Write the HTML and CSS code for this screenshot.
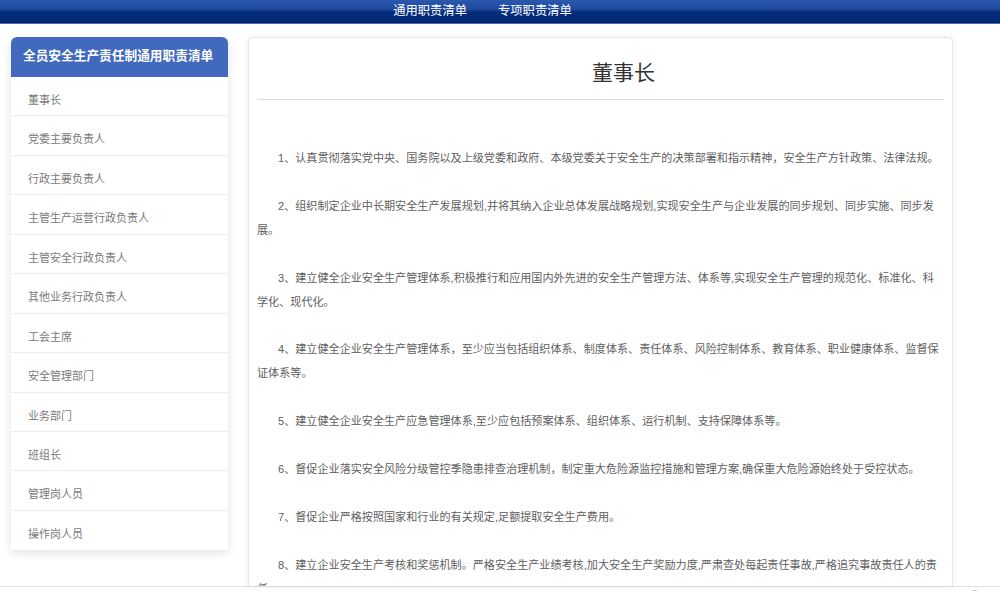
FILE: index.html
```html
<!DOCTYPE html>
<html>
<head>
<meta charset="utf-8">
<title>全员安全生产责任制通用职责清单</title>
<link rel="stylesheet" href="styles.css">
</head>
<body>
<header class="topnav">
  <a class="topnav-link" href="#">通用职责清单</a>
  <a class="topnav-link" href="#">专项职责清单</a>
</header>
<div class="layout">
  <aside class="sidebar">
    <div class="sidebar-head">全员安全生产责任制通用职责清单</div>
    <ul class="sidebar-list">
      <li class="sidebar-item">董事长</li>
      <li class="sidebar-item">党委主要负责人</li>
      <li class="sidebar-item">行政主要负责人</li>
      <li class="sidebar-item">主管生产运营行政负责人</li>
      <li class="sidebar-item">主管安全行政负责人</li>
      <li class="sidebar-item">其他业务行政负责人</li>
      <li class="sidebar-item">工会主席</li>
      <li class="sidebar-item">安全管理部门</li>
      <li class="sidebar-item">业务部门</li>
      <li class="sidebar-item">班组长</li>
      <li class="sidebar-item">管理岗人员</li>
      <li class="sidebar-item">操作岗人员</li>
    </ul>
  </aside>
  <main class="card">
    <h1 class="card-title">董事长</h1>
    <div class="card-body">
      <p>1、认真贯彻落实党中央、国务院以及上级党委和政府、本级党委关于安全生产的决策部署和指示精神，安全生产方针政策、法律法规。</p>
      <p>2、组织制定企业中长期安全生产发展规划,并将其纳入企业总体发展战略规划,实现安全生产与企业发展的同步规划、同步实施、同步发<br>展。</p>
      <p>3、建立健全企业安全生产管理体系,积极推行和应用国内外先进的安全生产管理方法、体系等,实现安全生产管理的规范化、标准化、科<br>学化、现代化。</p>
      <p>4、建立健全企业安全生产管理体系，至少应当包括组织体系、制度体系、责任体系、风险控制体系、教育体系、职业健康体系、监督保<br>证体系等。</p>
      <p>5、建立健全企业安全生产应急管理体系,至少应包括预案体系、组织体系、运行机制、支持保障体系等。</p>
      <p>6、督促企业落实安全风险分级管控季隐患排查治理机制，制定重大危险源监控措施和管理方案,确保重大危险源始终处于受控状态。</p>
      <p>7、督促企业严格按照国家和行业的有关规定,足额提取安全生产费用。</p>
      <p>8、建立企业安全生产考核和奖惩机制。严格安全生产业绩考核,加大安全生产奖励力度,严肃查处每起责任事故,严格追究事故责任人的责<br>任。</p>
    </div>
  </main>
</div>
<footer class="footer">
  <svg class="footer-icon" width="22" height="22" viewBox="0 0 22 22"><circle cx="11" cy="11" r="9" fill="none" stroke="#aaa" stroke-width="1.5"/></svg>
</footer>
</body>
</html>
```
FILE: styles.css
```css
* { box-sizing: border-box; }
html, body { margin: 0; padding: 0; }
body {
  background: #fff;
  font-family: "Liberation Sans", "Noto Sans CJK SC", sans-serif;
  color: #555;
}
.topnav {
  height: 24px;
  display: flex;
  justify-content: center;
  gap: 31px;
  padding-right: 35px;
  background: linear-gradient(#2b57ad 0%, #1d489b 42%, #062c7c 52%, #00286f 100%);
  border-bottom: 1px solid #4d6db0;
}
.topnav-link {
  color: #fff;
  text-decoration: none;
  font-size: 12.3px;
  line-height: 23px;
}
.layout {
  display: flex;
  align-items: flex-start;
  gap: 20px;
  padding: 13px 0 0 11px;
}
.sidebar {
  width: 217px;
  flex: none;
  background: #fff;
  border-radius: 6px 6px 0 0;
  box-shadow: 0 3px 10px rgba(0,0,0,0.12);
}
.sidebar-head {
  height: 40px;
  background: #4169be;
  border-radius: 6px 6px 0 0;
  color: #fff;
  font-weight: bold;
  font-size: 12.7px;
  line-height: 38px;
  padding-left: 12px;
  white-space: nowrap;
}
.sidebar-list {
  list-style: none;
  margin: 0;
  padding: 0;
}
.sidebar-item {
  height: 39.45px;
  padding-top: 8px;
  line-height: 30px;
  border-bottom: 1px solid #eee;
  padding-left: 17px;
  font-size: 11px;
  color: #7a7a7a;
}
.sidebar-item:last-child { border-bottom: none; }
.card {
  width: 705px;
  height: 549px;
  overflow: hidden;
  background: #fff;
  border: 1px solid #e6e6e6;
  border-bottom: none;
  border-radius: 5px 5px 0 0;
  box-shadow: 0 0 6px rgba(0,0,0,0.08);
  padding: 0 8px;
}
.card-title {
  margin: 0;
  padding: 20px 0 11px 46px;
  text-align: center;
  font-size: 21px;
  line-height: 30px;
  font-weight: normal;
  color: #333;
  border-bottom: 1px solid #ddd;
}
.card-body {
  padding-top: 46px;
}
.card-body p {
  margin: 0 0 23.8px;
  font-size: 11.1px;
  line-height: 24px;
  text-indent: 21px;
  color: #606060;
}
.footer {
  height: 40px;
  border-top: 1px solid #e2e2e2;
  display: flex;
  justify-content: flex-end;
  padding: 2px 14px 0 0;
}
.footer-icon { display: block; }
```
